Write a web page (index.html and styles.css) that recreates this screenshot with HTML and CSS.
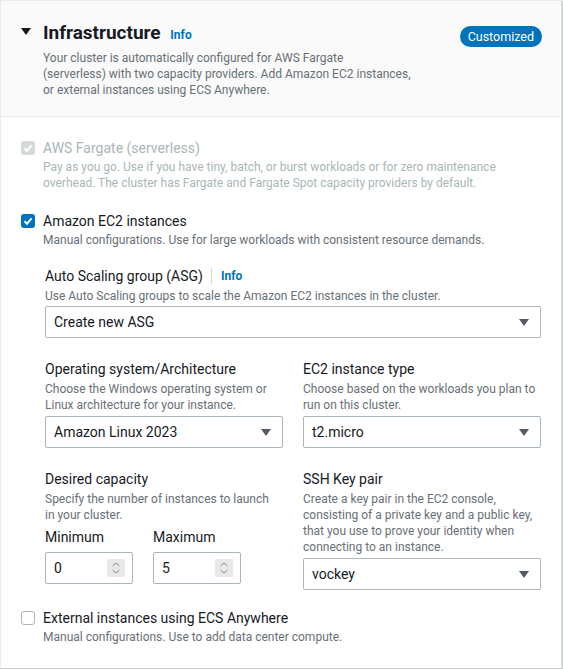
FILE: index.html
```html
<!DOCTYPE html>
<html lang="en">
<head>
<meta charset="utf-8">
<title>Infrastructure</title>
<link rel="stylesheet" href="styles.css">
</head>
<body>
<section class="panel">
  <header class="panel-header">
    <svg class="expand-caret" width="10" height="7" viewBox="0 0 10 7"><polygon points="0,0 10,0 5,7" fill="#16191f"/></svg>
    <div class="header-main">
      <h2 class="title">Infrastructure <a class="info">Info</a></h2>
      <p class="header-desc">Your cluster is automatically configured for AWS Fargate<br>(serverless) with two capacity providers. Add Amazon EC2 instances,<br>or external instances using ECS Anywhere.</p>
    </div>
    <span class="badge">Customized</span>
  </header>

  <div class="panel-body">
    <div class="option">
      <span class="checkbox disabled">
        <svg width="14" height="14" viewBox="0 0 14 14"><path d="M3.5 7.2 L6 9.7 L10.6 4.4" fill="none" stroke="#fff" stroke-width="2"/></svg>
      </span>
      <div class="option-text">
        <div class="option-label disabled-text">AWS Fargate (serverless)</div>
        <div class="option-desc disabled-text">Pay as you go. Use if you have tiny, batch, or burst workloads or for zero maintenance<br>overhead. The cluster has Fargate and Fargate Spot capacity providers by default.</div>
      </div>
    </div>

    <div class="option gap-top">
      <span class="checkbox checked">
        <svg width="14" height="14" viewBox="0 0 14 14"><path d="M3.5 7.2 L6 9.7 L10.6 4.4" fill="none" stroke="#fff" stroke-width="2"/></svg>
      </span>
      <div class="option-text">
        <div class="option-label">Amazon EC2 instances</div>
        <div class="option-desc">Manual configurations. Use for large workloads with consistent resource demands.</div>

        <div class="subsection">
          <div class="field">
            <div class="field-label">Auto Scaling group (ASG)<span class="divider"></span><a class="info">Info</a></div>
            <div class="field-desc">Use Auto Scaling groups to scale the Amazon EC2 instances in the cluster.</div>
            <div class="select asg-select"><span>Create new ASG</span><svg width="10" height="7" viewBox="0 0 10 7"><polygon points="0,0 10,0 5,7" fill="#545b64"/></svg></div>
          </div>

          <div class="grid-row">
            <div class="field">
              <div class="field-label">Operating system/Architecture</div>
              <div class="field-desc">Choose the Windows operating system or<br>Linux architecture for your instance.</div>
              <div class="select row-select"><span>Amazon Linux 2023</span><svg width="10" height="7" viewBox="0 0 10 7"><polygon points="0,0 10,0 5,7" fill="#545b64"/></svg></div>
            </div>
            <div class="field">
              <div class="field-label">EC2 instance type</div>
              <div class="field-desc">Choose based on the workloads you plan to<br>run on this cluster.</div>
              <div class="select row-select"><span>t2.micro</span><svg width="10" height="7" viewBox="0 0 10 7"><polygon points="0,0 10,0 5,7" fill="#545b64"/></svg></div>
            </div>
          </div>

          <div class="grid-row">
            <div class="field">
              <div class="field-label">Desired capacity</div>
              <div class="field-desc">Specify the number of instances to launch<br>in your cluster.</div>
              <div class="capacity">
                <div class="num-field">
                  <div class="field-label">Minimum</div>
                  <div class="num-input"><span>0</span>
                    <svg class="spin" width="18" height="18" viewBox="0 0 18 18"><rect width="18" height="18" fill="#e9e9e9"/><polyline points="5.5,7 9,4 12.5,7" fill="none" stroke="#8a8a8a" stroke-width="1"/><polyline points="5.5,11 9,14 12.5,11" fill="none" stroke="#8a8a8a" stroke-width="1"/></svg>
                  </div>
                </div>
                <div class="num-field">
                  <div class="field-label">Maximum</div>
                  <div class="num-input"><span>5</span>
                    <svg class="spin" width="18" height="18" viewBox="0 0 18 18"><rect width="18" height="18" fill="#e9e9e9"/><polyline points="5.5,7 9,4 12.5,7" fill="none" stroke="#8a8a8a" stroke-width="1"/><polyline points="5.5,11 9,14 12.5,11" fill="none" stroke="#8a8a8a" stroke-width="1"/></svg>
                  </div>
                </div>
              </div>
            </div>
            <div class="field">
              <div class="field-label">SSH Key pair</div>
              <div class="field-desc">Create a key pair in the EC2 console,<br>consisting of a private key and a public key,<br>that you use to prove your identity when<br>connecting to an instance.</div>
              <div class="select row-select"><span>vockey</span><svg width="10" height="7" viewBox="0 0 10 7"><polygon points="0,0 10,0 5,7" fill="#545b64"/></svg></div>
            </div>
          </div>
        </div>
      </div>
    </div>

    <div class="option ext">
      <span class="checkbox unchecked"></span>
      <div class="option-text">
        <div class="option-label">External instances using ECS Anywhere</div>
        <div class="option-desc">Manual configurations. Use to add data center compute.</div>
      </div>
    </div>
  </div>
</section>
</body>
</html>
```
FILE: styles.css
```css
* { box-sizing: border-box; }
body {
  margin: 0;
  background: #fff;
  font-family: Roboto, "Liberation Sans", Arial, sans-serif;
  color: #16191f;
}
.panel {
  width: 562px;
  height: 669px;
  border: 1px solid #eaeded;
  border-right-color: #d5dbdb;
  border-bottom-color: #c6cbcc;
  box-shadow: 1px 1px 1px rgba(0, 28, 36, 0.18);
  background: #fff;
}
.panel-header {
  display: flex;
  align-items: flex-start;
  background: #fafafa;
  border-bottom: 1px solid #eaeded;
  padding: 21px 19px 18px 20px;
}
.expand-caret {
  flex: none;
  margin-top: 6px;
  margin-right: 12px;
}
.header-main { flex: 1; }
.title {
  margin: 0;
  font-size: 19px;
  line-height: 22px;
  font-weight: 700;
  color: #16191f;
}
.info {
  font-size: 12px;
  font-weight: 700;
  color: #0073bb;
  margin-left: 5px;
}
.header-desc {
  margin: 4px 0 0;
  font-size: 12px;
  line-height: 16px;
  color: #687078;
  white-space: nowrap;
}
.badge {
  flex: none;
  margin-top: 4px;
  height: 21px;
  line-height: 21px;
  padding: 0 8px;
  border-radius: 11px;
  background: #0073bb;
  color: #fff;
  font-size: 12.5px;
}
.panel-body {
  padding: 21px 20px 0 20px;
}
.option {
  display: flex;
  align-items: flex-start;
}
.gap-top { margin-top: 20px; }
.ext { margin-top: 18px; }
.checkbox {
  flex: none;
  width: 14px;
  height: 14px;
  margin-top: 3px;
  margin-right: 8px;
  border-radius: 3px;
  display: block;
}
.checkbox svg { display: block; }
.checkbox.checked { background: #0073bb; }
.checkbox.disabled { background: #d5dbdb; }
.checkbox.unchecked { border: 1px solid #aab7b8; background: #fff; }
.option-text { flex: 1; }
.option-label {
  font-size: 14px;
  line-height: 20px;
  white-space: nowrap;
}
.option-desc {
  margin-top: 1px;
  font-size: 12px;
  line-height: 16px;
  color: #687078;
  white-space: nowrap;
}
.disabled-text { color: #aab7b8; }
.subsection {
  margin: 18px 0 0 2px;
}
.field-label {
  font-size: 14px;
  line-height: 20px;
  white-space: nowrap;
  display: flex;
  align-items: center;
}
.field-label .info { margin-left: 0; }
.divider {
  display: inline-block;
  width: 1px;
  height: 16px;
  background: #d5dbdb;
  margin: 0 9px 0 8px;
}
.field-desc {
  margin-top: 2px;
  font-size: 12px;
  line-height: 16px;
  color: #687078;
  white-space: nowrap;
}
.select {
  display: flex;
  align-items: center;
  justify-content: space-between;
  height: 32px;
  border: 1px solid #aab7b8;
  border-radius: 2px;
  padding: 0 11px 0 8px;
  font-size: 14px;
  background: #fff;
}
.asg-select { margin-top: 2px; }
.row-select { margin-top: 3px; }
.grid-row {
  display: grid;
  grid-template-columns: 238px 238px;
  column-gap: 20px;
  margin-top: 21px;
}
.capacity {
  display: flex;
  gap: 20px;
  margin-top: 4px;
}
.num-field { width: 88px; }
.num-input {
  margin-top: 5px;
  height: 32px;
  border: 1px solid #aab7b8;
  border-radius: 2px;
  display: flex;
  align-items: center;
  justify-content: space-between;
  padding: 0 7px 0 8px;
  font-size: 14px;
}
.spin { display: block; }
```
